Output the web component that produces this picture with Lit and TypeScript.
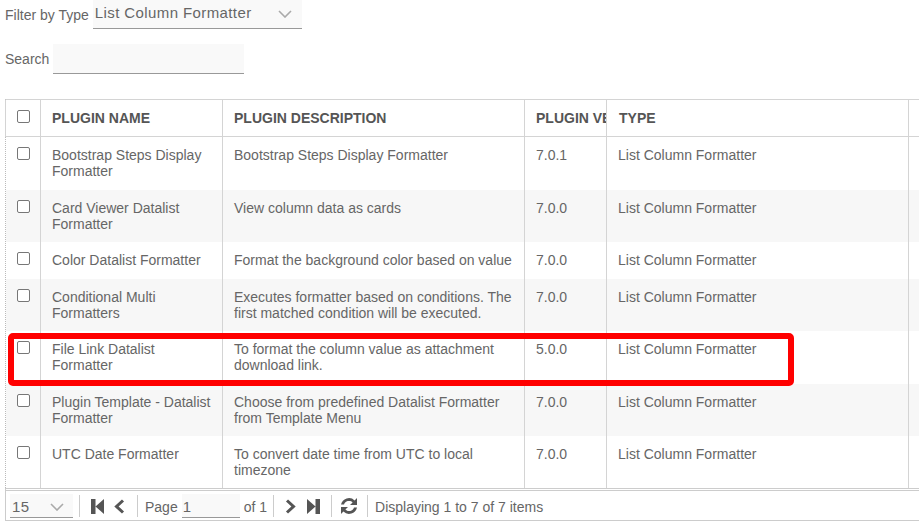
import { LitElement, html, css, svg } from "lit";
import { customElement } from "lit/decorators.js";

const rows = [
  ["Bootstrap Steps Display Formatter", "Bootstrap Steps Display Formatter", "7.0.1", 53],
  ["Card Viewer Datalist Formatter", "View column data as cards", "7.0.0", 52],
  ["Color Datalist Formatter", "Format the background color based on value", "7.0.0", 37],
  ["Conditional Multi Formatters", "Executes formatter based on conditions. The first matched condition will be executed.", "7.0.0", 52],
  ["File Link Datalist Formatter", "To format the column value as attachment download link.", "5.0.0", 53],
  ["Plugin Template - Datalist Formatter", "Choose from predefined Datalist Formatter from Template Menu", "7.0.0", 52],
  ["UTC Date Formatter", "To convert date time from UTC to local timezone", "7.0.0", 52],
] as const;

const chevron = svg`<svg class="chev" width="14" height="8" viewBox="0 0 14 8"><path d="M1 1l6 6 6-6" fill="none" stroke="#aaa" stroke-width="1.6"/></svg>`;

@customElement("app-root")
export class AppRoot extends LitElement {
  static styles = css`
    :host { display: block; position: relative; width: 919px; height: 528px; overflow: hidden; background: #fff; font: 14px/16px "Liberation Sans", Arial, sans-serif; color: #666; }
    .filters { display: flex; flex-direction: column; padding-left: 5px; height: 99px; box-sizing: border-box; }
    .line { display: flex; align-items: center; }
    .line.one { height: 29px; gap: 4px; }
    .line.two { height: 30px; margin-top: 15px; gap: 4px; }
    .field { background: #f9f9f9; border-bottom: 1px solid #999; box-sizing: border-box; display: flex; align-items: center; justify-content: space-between; }
    .f-type { width: 209px; height: 29px; padding: 0 3px 2px 2px; font-size: 15px; letter-spacing: 0.4px; }
    .f-type .chev { margin: 2px 7px 0 0; }
    .f-search { width: 191px; height: 30px; }
    .table { margin-left: 5px; width: 914px; border-top: 1px solid #d4d4d4; border-left: 1px dotted #bbb; box-sizing: border-box; }
    .row { display: grid; grid-template-columns: 35px 182px 302px 82px 302px 10px; box-sizing: border-box; }
    .row.alt { background: #f7f7f7; }
    .head { height: 37px; border-bottom: 1px solid #d4d4d4; border-left: 1px solid #d4d4d4; margin-left: -1px; font-weight: 700; color: #555; }
    .cell { border-right: 1px solid #d4d4d4; padding: 10px 10px 0 11px; box-sizing: border-box; min-width: 0; }
    .head .cell { padding-top: 10px; white-space: nowrap; overflow: hidden; }
    .cell:last-child { border-right: 0; padding: 0; }
    .cell.cb { padding: 0; display: flex; justify-content: center; }
    .head .cell.type { padding-left: 12px; }
    .box { width: 11px; height: 11px; border: 1px solid #777; border-radius: 2px; background: #fff; margin: 10px 0 0 1px; }
    .bar { margin-left: 5px; width: 914px; height: 33px; border-top: 3px double #ccc; border-bottom: 1px solid #ccc; border-left: 1px solid #ccc; box-sizing: border-box; display: flex; align-items: center; padding-left: 4px; }
    .f-size { width: 63px; height: 24px; padding: 4px 9px 0 2px; font-size: 15px; letter-spacing: 0.4px; }
    .group { display: flex; align-items: center; height: 22px; border-right: 1px solid #ccc; }
    .g-size { padding-right: 6px; }
    .g-first { padding: 0 12px 0 11px; gap: 9px; }
    .g-page { padding: 0 6px 0 7px; }
    .g-next { padding: 0 11px; gap: 10px; }
    .g-refresh { padding: 0 9px 0 8px; }
    .label { padding-top: 2px; }
    .status { padding: 2px 0 0 7px; }
    .f-page { width: 58px; height: 24px; margin: 0 4px; padding: 4px 0 0 1px; font-size: 15px; justify-content: flex-start; }
    .ico { display: block; margin-top: 1px; }
    .mark { position: absolute; left: 8px; top: 333px; width: 786px; height: 53px; border: 6px solid #f00; border-radius: 5px; box-sizing: border-box; }
  `;

  render() {
    return html`
      <div class="filters">
        <div class="line one"><span>Filter by Type</span><div class="field f-type"><span>List Column Formatter</span>${chevron}</div></div>
        <div class="line two"><span>Search</span><div class="field f-search"></div></div>
      </div>
      <div class="table">
        <div class="row head">
          <div class="cell cb"><div class="box"></div></div>
          <div class="cell">PLUGIN NAME</div>
          <div class="cell">PLUGIN DESCRIPTION</div>
          <div class="cell">PLUGIN VERSION</div>
          <div class="cell type">TYPE</div>
          <div class="cell"></div>
        </div>
        ${rows.map((r, i) => html`
          <div class="row ${i % 2 ? "alt" : ""}" style="height:${r[3]}px">
            <div class="cell cb"><div class="box"></div></div>
            <div class="cell">${r[0]}</div>
            <div class="cell">${r[1]}</div>
            <div class="cell">${r[2]}</div>
            <div class="cell type">List Column Formatter</div>
            <div class="cell"></div>
          </div>`)}
      </div>
      <div class="bar">
        <div class="group g-size"><div class="field f-size"><span>15</span>${chevron}</div></div>
        <div class="group g-first">
          <svg class="ico" width="13" height="15" viewBox="0 0 13 15"><path d="M0 0h4.5v15H0zM4.5 7.5L13 0v15z" fill="#555"/></svg>
          <svg class="ico" width="12" height="15" viewBox="0 0 12 15"><path d="M10 1.5L3.5 7.5 10 13.5" fill="none" stroke="#555" stroke-width="3"/></svg>
        </div>
        <div class="group g-page">
          <span class="label">Page</span>
          <div class="field f-page">1</div>
          <span class="label">of 1</span>
        </div>
        <div class="group g-next">
          <svg class="ico" width="12" height="15" viewBox="0 0 12 15"><path d="M2 1.5L8.5 7.5 2 13.5" fill="none" stroke="#555" stroke-width="3"/></svg>
          <svg class="ico" width="13" height="15" viewBox="0 0 13 15"><path d="M0 0l8.5 7.5L0 15zM8.5 0H13v15H8.5z" fill="#555"/></svg>
        </div>
        <div class="group g-refresh">
          <svg class="ico" width="18" height="18" viewBox="0 0 18 18"><path d="M1 7.5A8.2 8.2 0 0 1 14.6 3.4L17 1v7h-7l2.6-2.6A5.2 5.2 0 0 0 4 7.5zM17 10.5A8.2 8.2 0 0 1 3.4 14.6L1 17v-7h7l-2.6 2.6A5.2 5.2 0 0 0 14 10.5z" fill="#555"/></svg>
        </div>
        <span class="status">Displaying 1 to 7 of 7 items</span>
      </div>
      <div class="mark"></div>
    `;
  }
}
